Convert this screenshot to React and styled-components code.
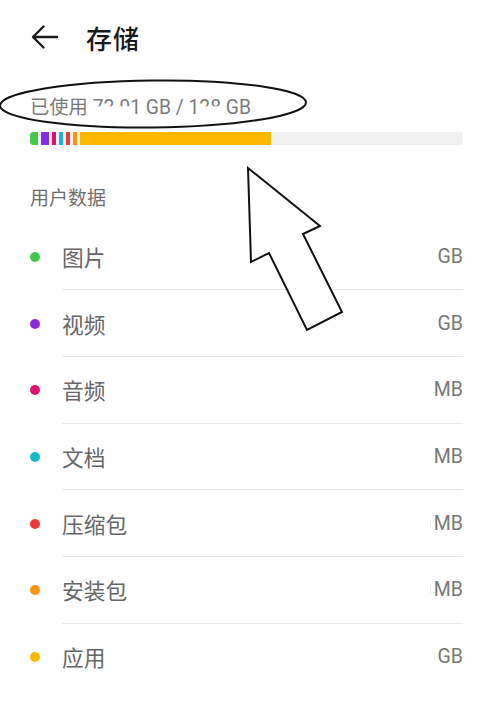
import React from "react";
import styled, { createGlobalStyle } from "styled-components";

const GlobalStyle = createGlobalStyle`
  html, body {
    margin: 0;
    padding: 0;
    background: #fff;
  }
  body {
    font-family: Roboto, "Noto Sans CJK SC", sans-serif;
  }
`;

const Page = styled.div`
  position: relative;
  width: 494px;
  height: 724px;
  overflow: hidden;
  padding: 0 31px 0 30px;
  box-sizing: border-box;
`;

const Header = styled.div`
  display: flex;
  align-items: center;
  height: 74px;
`;

const BackButton = styled.div`
  display: flex;
  align-items: center;
  width: 28px;
  height: 28px;
  margin-left: 1px;
`;

const Title = styled.div`
  margin-left: 27px;
  font-size: 26px;
  font-weight: 500;
  color: #1a1a1a;
  letter-spacing: 1px;
`;

const Usage = styled.div`
  margin-top: 21px;
  font-size: 19.3px;
  line-height: 26px;
  color: #7a7a7a;
`;

const Hidden = styled.span`
  clip-path: inset(0 0 ${(p) => p.$cut || "55%"} 0);
`;

const Bar = styled.div`
  display: flex;
  gap: 3px;
  height: 13px;
  margin-top: 11px;
  background: #f1f1f1;
  border-radius: 3px;
  overflow: hidden;
`;

const Segment = styled.div`
  flex: none;
  height: 100%;
  background: ${(p) => p.$color};
  border-radius: ${(p) => (p.$first ? "3px 0 0 3px" : "0")};
`;

const SectionLabel = styled.div`
  margin-top: 41px;
  font-size: 19px;
  line-height: 26px;
  color: #6e6e6e;
`;

const List = styled.div`
  margin-top: 11.5px;
`;

const Row = styled.div`
  display: flex;
  align-items: stretch;
  height: 66.7px;
`;

const DotCell = styled.div`
  display: flex;
  align-items: center;
  width: 32px;
  flex: none;
`;

const Dot = styled.div`
  width: 10px;
  height: 10px;
  border-radius: 50%;
  background: ${(p) => p.$color};
`;

const RowBody = styled.div`
  flex: 1;
  display: flex;
  align-items: center;
  justify-content: space-between;
  border-bottom: ${(p) => (p.$last ? "none" : "1px solid #e8e8e8")};
  box-sizing: border-box;
`;

const Label = styled.div`
  font-size: 21.7px;
  color: #666;
`;

const Value = styled.div`
  display: flex;
  align-items: center;
  gap: 3px;
  font-size: 19.5px;
  color: #777;
`;

const Tick = styled.span`
  display: inline-block;
  width: 1px;
  height: 9px;
  background: #ececec;
`;

const Overlay = styled.svg`
  position: absolute;
  left: 0;
  top: 0;
  pointer-events: none;
`;

const segments = [
  { color: "#43c84a", width: 8, first: true },
  { color: "#8a2be2", width: 8 },
  { color: "#e0106f", width: 4 },
  { color: "#11bcc8", width: 4 },
  { color: "#f0383a", width: 4 },
  { color: "#ff920f", width: 4 },
  { color: "#ffb800", width: 191 },
];

const rows = [
  { name: "图片", color: "#43c84a", unit: "GB" },
  { name: "视频", color: "#8a2be2", unit: "GB" },
  { name: "音频", color: "#e0106f", unit: "MB" },
  { name: "文档", color: "#11bcc8", unit: "MB" },
  { name: "压缩包", color: "#f0383a", unit: "MB", tick: true },
  { name: "安装包", color: "#ff920f", unit: "MB", tick: true },
  { name: "应用", color: "#ffb800", unit: "GB", tick: true },
];

const App = () => {
  return (
    <Page>
      <GlobalStyle />
      <Header>
        <BackButton>
          <svg width="28" height="28" viewBox="0 0 28 28" fill="none">
            <path
              d="M26 14H2.5M12.5 3.5L2 14l10.5 10.5"
              stroke="#1a1a1a"
              strokeWidth="2.4"
              strokeLinecap="round"
              strokeLinejoin="round"
            />
          </svg>
        </BackButton>
        <Title>存储</Title>
      </Header>

      <Usage>
        已使用 <Hidden>72.9</Hidden>1 GB / 1<Hidden>28</Hidden> GB
      </Usage>

      <Bar>
        {segments.map((s, i) => (
          <Segment
            key={i}
            $color={s.color}
            $first={s.first}
            style={{ width: s.width }}
          />
        ))}
      </Bar>

      <SectionLabel>用户数据</SectionLabel>

      <List>
        {rows.map((r, i) => (
          <Row key={r.name}>
            <DotCell>
              <Dot $color={r.color} />
            </DotCell>
            <RowBody $last={i === rows.length - 1}>
              <Label>{r.name}</Label>
              <Value>
                {r.tick && <Tick />}
                {r.unit}
              </Value>
            </RowBody>
          </Row>
        ))}
      </List>

      <Overlay width="494" height="724" viewBox="0 0 494 724">
        <ellipse
          cx="153"
          cy="104"
          rx="153"
          ry="23.5"
          fill="none"
          stroke="#111"
          strokeWidth="2"
          transform="rotate(-0.6 153 104)"
        />
        <polygon
          points="248,168 320,226 303,234 342,312 307,330 269,253 251,262"
          fill="#fff"
          stroke="#111"
          strokeWidth="2"
          strokeLinejoin="miter"
        />
      </Overlay>
    </Page>
  );
};

export default App;
